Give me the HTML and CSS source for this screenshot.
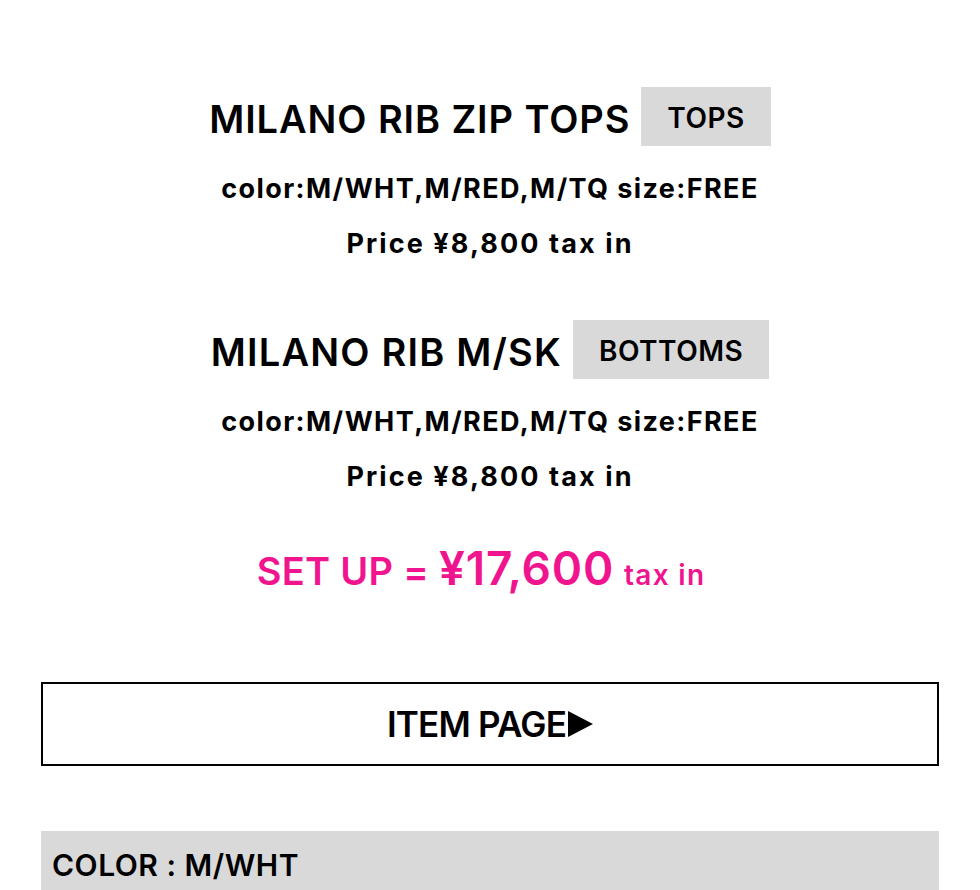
FILE: index.html
```html
<!DOCTYPE html>
<html lang="ja">
<head>
<meta charset="utf-8">
<title>MILANO RIB SET UP</title>
<link rel="stylesheet" href="styles.css">
</head>
<body>
<main class="page">
  <section class="item item-first">
    <div class="item-head">
      <h2 class="item-name">MILANO RIB ZIP TOPS</h2>
      <span class="tag">TOPS</span>
    </div>
    <p class="spec">color:M/WHT,M/RED,M/TQ size:FREE</p>
    <p class="price">Price ¥8,800 tax in</p>
  </section>
  <section class="item item-second">
    <div class="item-head">
      <h2 class="item-name">MILANO RIB M/SK</h2>
      <span class="tag">BOTTOMS</span>
    </div>
    <p class="spec">color:M/WHT,M/RED,M/TQ size:FREE</p>
    <p class="price">Price ¥8,800 tax in</p>
  </section>
  <p class="setup">SET UP = <span class="setup-amount">¥17,600</span> <span class="setup-tax">tax in</span></p>
  <a class="item-link" href="#">ITEM PAGE<svg class="arrow" viewBox="0 0 25 26" width="25" height="26"><path d="M0 0 L25 13 L0 26 Z" fill="#000"/></svg></a>
  <div class="color-bar">COLOR : M/WHT</div>
</main>
</body>
</html>
```
FILE: styles.css
```css
html, body {
  margin: 0;
  padding: 0;
  background: #fff;
}
body {
  font-family: "Inter", "Noto Sans", sans-serif;
  color: #000;
  overflow: hidden;
}
.page {
  padding: 87px 41px 0;
  display: flex;
  flex-direction: column;
}
.item {
  display: flex;
  flex-direction: column;
  align-items: center;
}
.item-second {
  margin-top: 56px;
}
.item-head {
  display: flex;
  align-items: center;
  gap: 11px;
}
.item-name {
  margin: 0;
  height: 59px;
  box-sizing: border-box;
  padding-top: 5px;
  font-size: 38px;
  font-weight: 600;
  letter-spacing: 0.9px;
  line-height: 55px;
}
.item-second .item-name {
  letter-spacing: 1.2px;
}
.tag {
  background: #d9d9d9;
  height: 59px;
  box-sizing: border-box;
  padding: 3px 26px 0;
  line-height: 56px;
  font-size: 28px;
  font-weight: 600;
  letter-spacing: 0.5px;
}
.spec {
  margin: 23px 0 0;
  font-size: 27px;
  font-weight: 700;
  letter-spacing: 1.4px;
  line-height: 40px;
}
.price {
  margin: 15px 0 0;
  font-size: 27px;
  font-weight: 700;
  letter-spacing: 2.1px;
  line-height: 40px;
}
.setup {
  margin: 48px 0 0;
  padding-right: 18px;
  height: 50px;
  text-align: center;
  color: #f0158f;
  font-size: 38px;
  font-weight: 600;
  letter-spacing: 0.3px;
  line-height: 50px;
}
.setup-amount {
  font-size: 46px;
  line-height: 1;
  letter-spacing: 0.8px;
}
.setup-tax {
  font-size: 28px;
  line-height: 1;
  letter-spacing: 1.3px;
}
.item-link {
  margin-top: 87px;
  height: 80px;
  border: 2px solid #000;
  display: flex;
  align-items: center;
  justify-content: center;
  color: #000;
  text-decoration: none;
  font-size: 35px;
  font-weight: 600;
  letter-spacing: -0.8px;
}
.arrow {
  margin-left: 2px;
}
.color-bar {
  margin-top: 65px;
  background: #d9d9d9;
  height: 70px;
  padding: 16px 11px 0;
  box-sizing: border-box;
  font-size: 30px;
  font-weight: 600;
  letter-spacing: 0.5px;
}
```
